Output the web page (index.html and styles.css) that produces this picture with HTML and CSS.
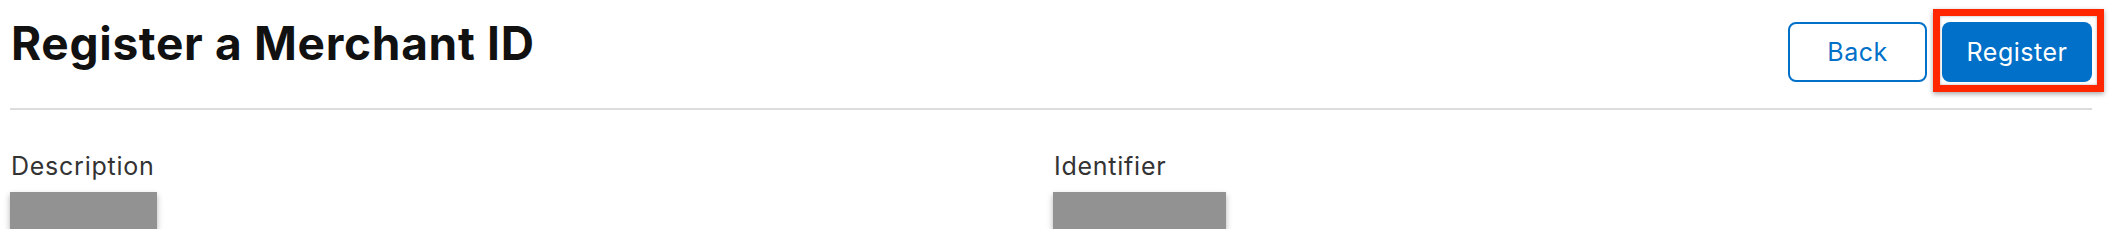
FILE: index.html
```html
<!DOCTYPE html>
<html lang="en">
<head>
<meta charset="utf-8">
<title>Register a Merchant ID</title>
<link rel="stylesheet" href="styles.css">
</head>
<body>
<div class="page">
  <header class="header">
    <h1 class="title">Register a Merchant ID</h1>
    <div class="actions">
      <button class="btn btn-secondary" type="button">Back</button>
      <div class="highlight-wrap">
        <button class="btn btn-primary" type="button">Register</button>
        <span class="highlight"></span>
      </div>
    </div>
  </header>
  <div class="divider"></div>
  <section class="details">
    <div class="field">
      <div class="field-label">Description</div>
      <div class="redacted redacted-desc"></div>
    </div>
    <div class="field">
      <div class="field-label">Identifier</div>
      <div class="redacted redacted-id"></div>
    </div>
  </section>
</div>
</body>
</html>
```

FILE: styles.css
```css
html, body {
  margin: 0;
  padding: 0;
  background: #ffffff;
}

body {
  font-family: Inter, "Noto Sans", "Liberation Sans", sans-serif;
  color: #333333;
}

.page {
  padding: 0 22px 0 10px;
}

.header {
  display: flex;
  justify-content: space-between;
  align-items: flex-start;
  padding-top: 15px;
}

.title {
  margin: 0;
  padding-left: 1px;
  font-size: 46px;
  line-height: 56px;
  font-weight: 700;
  color: #111111;
  letter-spacing: 0.7px;
}

.actions {
  display: flex;
  gap: 15px;
  margin-top: 7px;
}

.btn {
  box-sizing: border-box;
  height: 60px;
  border-radius: 8px;
  font-family: Inter, "Noto Sans", "Liberation Sans", sans-serif;
  font-size: 25px;
  font-weight: 400;
  letter-spacing: 0.5px;
  padding: 0;
  cursor: pointer;
}

.btn-secondary {
  width: 139px;
  background: #ffffff;
  color: #0070c9;
  border: 2px solid #0070c9;
}

.btn-primary {
  width: 150px;
  background: #0070c9;
  color: #ffffff;
  border: 0;
}

.highlight-wrap {
  position: relative;
}

.highlight {
  position: absolute;
  left: -9px;
  top: -13px;
  right: -12px;
  bottom: -10px;
  border: 7px solid #ff2600;
  box-shadow: 0 2px 5px rgba(0, 0, 0, 0.35), inset 0 0 3px rgba(0, 0, 0, 0.3);
  pointer-events: none;
}

.divider {
  margin-top: 26px;
  height: 2px;
  background: #dcdcdc;
}

.details {
  display: grid;
  grid-template-columns: 1043px 1fr;
  padding-top: 41px;
}

.field-label {
  font-size: 25px;
  line-height: 30px;
  letter-spacing: 0.75px;
  color: #333333;
  padding-left: 1px;
}

.redacted {
  margin-top: 11px;
  height: 37px;
  background: #929292;
  box-shadow: 0 3px 6px rgba(0, 0, 0, 0.3);
}

.redacted-desc {
  width: 147px;
}

.redacted-id {
  width: 173px;
}
```
